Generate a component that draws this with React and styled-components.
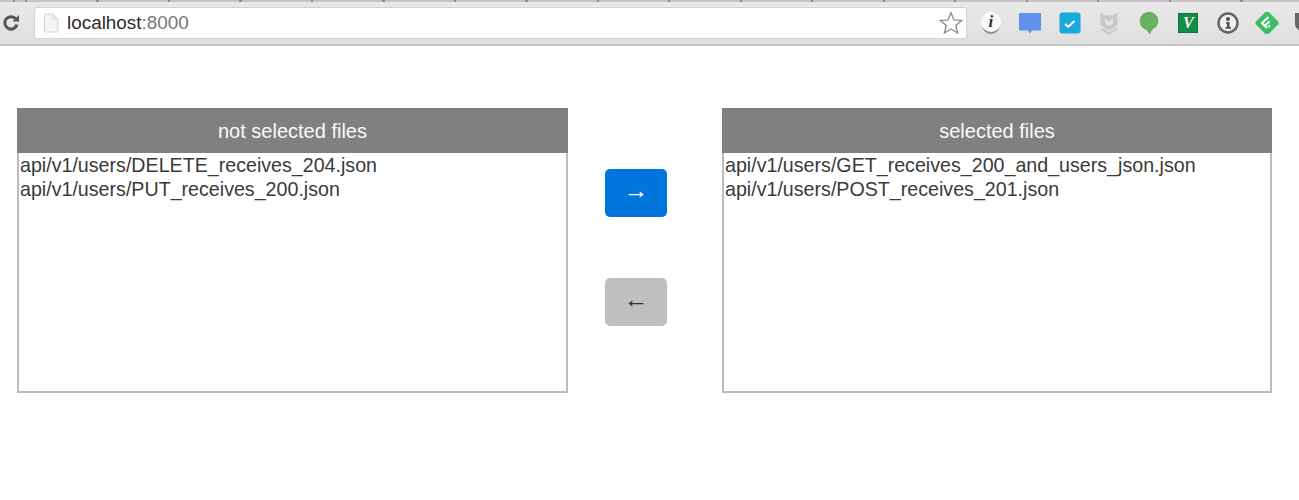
import React from "react";
import styled, { createGlobalStyle } from "styled-components";

const notSelected = [
  "api/v1/users/DELETE_receives_204.json",
  "api/v1/users/PUT_receives_200.json",
];
const selected = [
  "api/v1/users/GET_receives_200_and_users_json.json",
  "api/v1/users/POST_receives_201.json",
];

const App = () => {
  return (
    <>
      <GlobalStyle />
      <Toolbar>
        <TabEdge />
        <ToolRow>
          <ReloadIcon />
          <AddressBar>
            <PageIcon />
            <Url>
              localhost<Port>:8000</Port>
            </Url>
            <StarIcon />
          </AddressBar>
          <Extensions>
            <Slot>
              <InfoBadge>i</InfoBadge>
            </Slot>
            <Slot>
              <ChatIcon />
            </Slot>
            <Slot>
              <CheckIcon />
            </Slot>
            <Slot>
              <ShieldIcon />
            </Slot>
            <Slot>
              <BubbleIcon />
            </Slot>
            <Slot>
              <VBadge>V</VBadge>
            </Slot>
            <Slot>
              <KeyIcon />
            </Slot>
            <Slot>
              <FeedlyIcon />
            </Slot>
            <Slot>
              <CutIcon />
            </Slot>
          </Extensions>
        </ToolRow>
      </Toolbar>
      <Main>
        <FilePanel title="not selected files" files={notSelected} width={551} />
        <Buttons>
          <MoveButton $active>→</MoveButton>
          <MoveButton>←</MoveButton>
        </Buttons>
        <FilePanel title="selected files" files={selected} width={550} />
      </Main>
    </>
  );
};

const FilePanel = ({ title, files, width }) => (
  <Panel $width={width}>
    <PanelHeader>{title}</PanelHeader>
    <FileList>
      {files.map((file) => (
        <FileRow key={file}>{file}</FileRow>
      ))}
    </FileList>
  </Panel>
);

const ReloadIcon = () => (
  <svg width="18" height="18" viewBox="0 0 18 18" fill="none">
    <path d="M14 5.2A6.2 6.2 0 1 0 15 10.5" stroke="#555" strokeWidth="3" />
    <path d="M10.5 7.5H17V1z" fill="#555" />
  </svg>
);

const PageIcon = () => (
  <svg width="16" height="20" viewBox="0 0 16 20">
    <path d="M1.5 1H10L15 6V19H1.5z" fill="#f4f4f4" stroke="#d8d8d8" />
    <path d="M10 1V6H15" fill="#e6e6e6" stroke="#d8d8d8" />
  </svg>
);

const StarIcon = () => (
  <svg width="24" height="24" viewBox="0 0 24 24">
    <path
      d="M12 1.8l3 7.100 7.600.6-5.800 5 1.800 7.500-6.600-4-6.600 4 1.800-7.500-5.800-5 7.600-.6z"
      fill="#fff"
      stroke="#8f8f8f"
      strokeWidth="1.400"
    />
  </svg>
);

const ChatIcon = () => (
  <svg width="22" height="22" viewBox="0 0 22 22">
    <path d="M0 1h22v17.500h-9L11 21.500l-2-3H0z" fill="#6390ec" />
  </svg>
);

const CheckIcon = () => (
  <svg width="22" height="22" viewBox="0 0 22 22">
    <rect x="0.500" y="0.500" width="21" height="21" rx="3" fill="#19a9dd" />
    <path d="M6 12l3.200 2.800L15.500 9" fill="none" stroke="#fff" strokeWidth="2" />
  </svg>
);

const ShieldIcon = () => (
  <svg width="18" height="23" viewBox="0 0 18 23">
    <path d="M0.500 0l4.500 3.500h8L17.500 0v13L9 18.500 0.500 13z" fill="#c8c8c8" />
    <path d="M5 6l4 3.500L13 6v5.500l-4 2.500-4-2.500z" fill="#e2e2e2" />
    <path d="M1 15.500l8 5 8-5v2.500l-8 5-8-5z" fill="#c8c8c8" />
  </svg>
);

const BubbleIcon = () => (
  <svg width="20" height="24" viewBox="0 0 20 24">
    <circle cx="10" cy="10" r="9.300" fill="#6ab061" />
    <path d="M6 17h8l-3 6.500z" fill="#6ab061" />
  </svg>
);

const KeyIcon = () => (
  <svg width="22" height="22" viewBox="0 0 22 22">
    <circle cx="11" cy="11" r="9.500" fill="#f0f0f0" stroke="#626262" strokeWidth="2.400" />
    <circle cx="11" cy="7" r="2" fill="#505050" />
    <path d="M9 10h3.500v5H14v1.800H8.500V15H10v-3.400H9z" fill="#505050" />
  </svg>
);

const FeedlyIcon = () => (
  <svg width="26" height="22" viewBox="0 0 26 22">
    <rect x="4" y="2" width="18" height="18" rx="3" fill="#3fbf63" transform="rotate(45 13 11)" />
    <path
      d="M14.500 5L8 11l5 5M15.500 9.500L11.500 13M16 13.500l-1.700 1.500"
      fill="none"
      stroke="#fff"
      strokeWidth="2"
    />
  </svg>
);

const CutIcon = () => (
  <svg width="26" height="22" viewBox="0 0 26 22">
    <path d="M1 1h24v11c0 5-6 8-12 9.500C7 20 1 17 1 12z" fill="#666" />
  </svg>
);

const GlobalStyle = createGlobalStyle`
  html, body {
    margin: 0;
    background: #fff;
    font-family: "Liberation Sans", Arial, sans-serif;
  }
`;

const Toolbar = styled.header`
  height: 44px;
  background: linear-gradient(#e9e9e9, #dfdfdf);
  border-bottom: 2px solid #c6c6c6;
  overflow: hidden;
`;

const TabEdge = styled.div`
  height: 2px;
  background: repeating-linear-gradient(
    90deg,
    #8e8e8e 0 2px,
    #c4c4c4 2px 71.5px
  );
  background-position: 25px 0;
`;

const ToolRow = styled.div`
  display: flex;
  align-items: center;
  height: 32px;
  margin-top: 5px;
  padding-left: 2px;

  svg {
    flex: none;
  }
`;

const AddressBar = styled.div`
  display: flex;
  flex: none;
  align-items: center;
  box-sizing: border-box;
  width: 933px;
  height: 32px;
  margin-left: 14px;
  padding: 0 3px 0 8px;
  background: #fff;
  border: 1px solid #d4d4d4;
  border-radius: 3px;
`;

const Url = styled.span`
  flex: 1;
  margin-left: 8px;
  font-size: 18.900px;
  color: #2c2c2c;
`;

const Port = styled.span`
  color: #777;
`;

const Extensions = styled.div`
  display: grid;
  flex: none;
  grid-auto-flow: column;
  grid-auto-columns: 39.500px;
  margin-left: 4px;
`;

const Slot = styled.div`
  display: flex;
  align-items: center;
  justify-content: center;
  height: 32px;
`;

const InfoBadge = styled.div`
  width: 20px;
  height: 20px;
  margin-top: -2px;
  border-radius: 50%;
  background: #fafafa;
  box-shadow: 0 3px 0 -1px #8c8c8c;
  color: #333;
  font: italic bold 17px/20px "Liberation Serif", serif;
  text-align: center;
`;

const VBadge = styled.div`
  box-sizing: border-box;
  width: 20px;
  height: 20px;
  border: 1px solid #0b7a39;
  background: #128c46;
  color: #f4f4f4;
  font: italic bold 16px/18px "Liberation Serif", serif;
  text-align: center;
`;

const Main = styled.main`
  display: flex;
  padding: 62px 0 0 17px;
`;

const Panel = styled.section`
  box-sizing: border-box;
  flex: none;
  width: ${(props) => props.$width}px;
  height: 285px;
  border: 2px solid #bcbcbc;
  border-top: 0;
`;

const PanelHeader = styled.h2`
  margin: 0 -2px;
  height: 45px;
  background: #808080;
  color: #fafafa;
  font-size: 20px;
  font-weight: 400;
  line-height: 46px;
  text-align: center;
`;

const FileList = styled.ul`
  margin: 0;
  padding: 0 0 0 1px;
  list-style: none;
`;

const FileRow = styled.li`
  height: 24px;
  font-size: 19.650px;
  line-height: 24px;
  color: #3a3a3a;
`;

const Buttons = styled.div`
  display: flex;
  flex: none;
  flex-direction: column;
  gap: 61px;
  margin: 61px 55px 0 37px;
`;

const MoveButton = styled.button`
  width: 62px;
  height: 48px;
  padding: 0 0 5px;
  border: 0;
  border-radius: 5px;
  background: ${(props) => (props.$active ? "#0075dc" : "#bfbfbf")};
  color: ${(props) => (props.$active ? "#fff" : "#333")};
  font: 25px "Liberation Sans", sans-serif;
`;

export default App;
